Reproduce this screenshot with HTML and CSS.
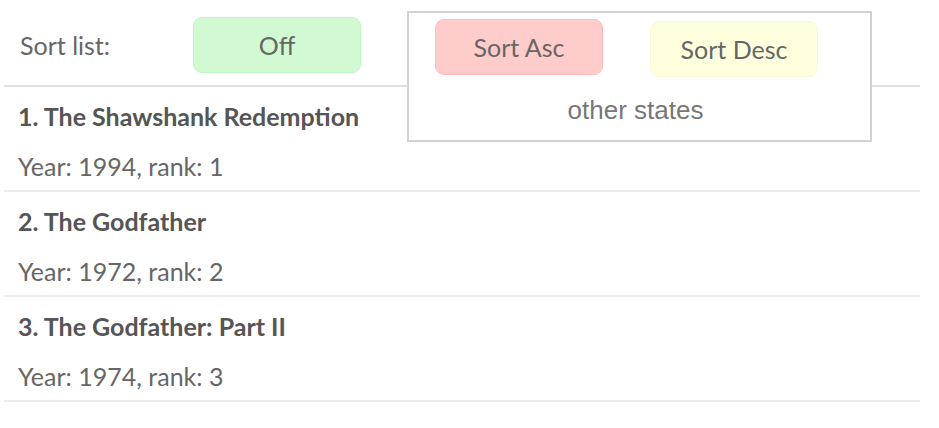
FILE: index.html
```html
<!DOCTYPE html>
<html>
<head>
<meta charset="utf-8">
<link rel="stylesheet" href="styles.css">
</head>
<body>
<div class="app">
  <div class="header">
    <span class="label">Sort list:</span>
    <button class="btn btn-off">Off</button>
  </div>
  <ul class="list">
    <li class="item">
      <div class="title">1. The Shawshank Redemption</div>
      <div class="meta">Year: 1994, rank: 1</div>
    </li>
    <li class="item">
      <div class="title">2. The Godfather</div>
      <div class="meta">Year: 1972, rank: 2</div>
    </li>
    <li class="item">
      <div class="title">3. The Godfather: Part II</div>
      <div class="meta">Year: 1974, rank: 3</div>
    </li>
  </ul>
  <div class="states">
    <div class="states-buttons">
      <button class="btn btn-asc">Sort Asc</button>
      <button class="btn btn-desc">Sort Desc</button>
    </div>
    <div class="states-caption">other states</div>
  </div>
</div>
</body>
</html>
```
FILE: styles.css
```css
html, body {
  margin: 0;
  padding: 0;
  background: #fff;
}
body {
  font-family: "Lato", "Open Sans", sans-serif;
  color: #555;
}
.app {
  position: relative;
  width: 916px;
  margin-left: 4px;
}
.header {
  display: flex;
  align-items: center;
  box-sizing: border-box;
  height: 87px;
  border-bottom: 2px solid #e0e0e0;
  padding-left: 16px;
  padding-top: 4px;
}
.label {
  font-size: 25px;
  color: #666;
  width: 173px;
}
.btn {
  font-family: inherit;
  font-size: 25px;
  color: #666;
  width: 168px;
  height: 56px;
  border-radius: 9px;
  border: 1px solid transparent;
  padding: 0;
  box-sizing: border-box;
}
.btn-off {
  background: #d2fad2;
  border-color: #c0f4c0;
}
.btn-asc {
  background: #ffcccc;
  border-color: #ffbcbc;
}
.btn-desc {
  background: #ffffdd;
  border-color: #fbf8d8;
  margin-top: 2px;
}
.list {
  list-style: none;
  margin: 0;
  padding: 0;
}
.item {
  height: 105px;
  box-sizing: border-box;
  border-bottom: 2px solid #ececec;
  padding: 14px 0 0 14px;
}
.title {
  font-weight: bold;
  font-size: 25px;
  color: #555;
  line-height: 30px;
}
.meta {
  font-size: 25px;
  color: #666;
  line-height: 30px;
  margin-top: 20px;
}
.states {
  position: absolute;
  left: 403px;
  top: 11px;
  width: 465px;
  height: 131px;
  box-sizing: border-box;
  border: 2px solid #d2d2d2;
  background: #fff;
  display: flex;
  flex-direction: column;
}
.states-buttons {
  display: flex;
  gap: 47px;
  padding: 6px 0 0 26px;
  align-items: flex-start;
}
.states-caption {
  font-family: "Liberation Sans", Arial, sans-serif;
  font-size: 26px;
  color: #777;
  text-align: center;
  margin-top: 18px;
  padding-right: 8px;
}
```
